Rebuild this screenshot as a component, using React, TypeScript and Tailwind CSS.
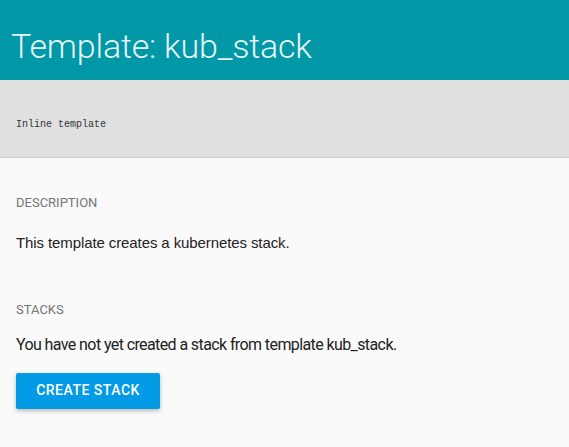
export default function App() {
  return (
    <div className="min-h-screen bg-[#fafafa] font-['Roboto',sans-serif]">
      {/* Toolbar */}
      <header className="flex h-20 items-center bg-[#0097a7] px-[11px] pt-[12px]">
        <h1 className="text-[34px] font-light leading-none tracking-[-0.2px] text-white/90">
          Template: kub_stack
        </h1>
      </header>

      {/* Template source */}
      <div className="flex h-[78px] items-center border-b border-[#cfcfcf] bg-[#e0e0e0] px-4 pt-[12px]">
        <pre className="font-['Liberation_Mono',monospace] text-[10px] text-[#333]">Inline template</pre>
      </div>

      <main className="px-4 pt-[35px]">
        <section>
          <h2 className="text-[13px] uppercase text-[#757575]">Description</h2>
          <p className="mt-[19px] font-['Liberation_Sans',sans-serif] text-[15px] tracking-[-0.1px] text-[#222]">
            This template creates a kubernetes stack.
          </p>
        </section>

        <section className="mt-[46px]">
          <h2 className="text-[13px] uppercase text-[#757575]">Stacks</h2>
          <p className="mt-[13px] text-[16px] tracking-[-0.6px] text-[#212121]">
            You have not yet created a stack from template kub_stack.
          </p>
          <button className="mt-[16px] h-9 w-[144px] rounded-[2px] bg-[#039be5] text-[14px] font-medium tracking-[0.5px] text-white shadow-[0_2px_4px_rgba(0,0,0,0.26)]">
            CREATE STACK
          </button>
        </section>
      </main>
    </div>
  )
}
